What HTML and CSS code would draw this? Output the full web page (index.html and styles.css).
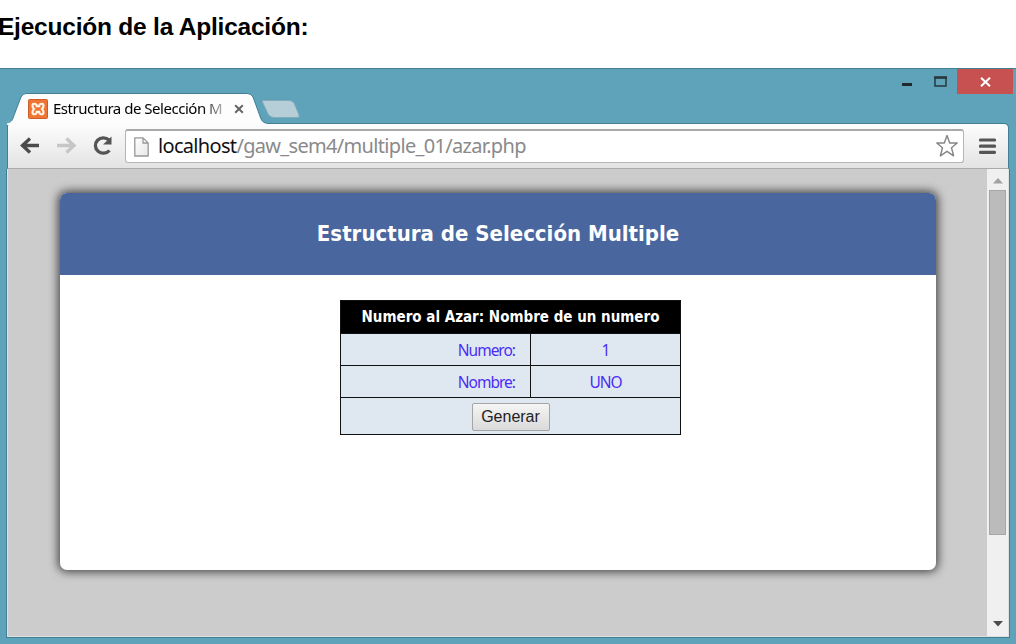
FILE: index.html
```html
<!DOCTYPE html>
<html lang="es">
<head>
<meta charset="utf-8">
<title>Ejecución de la Aplicación</title>
<link rel="stylesheet" href="styles.css">
</head>
<body>
<h1 class="doc-title"><span>Ejecución de la Aplicación:</span></h1>
<div class="window">
  <div class="titlebar">
    <div class="tabs">
      <div class="tab">
        <svg class="tab-shape" width="300" height="32" viewBox="0 0 300 32">
          <path d="M0 32V29C4 29 5 28 6 25L14 4Q16 .5 19 .5H240Q244 .5 246 4L254 26Q256 30.500 262 30.500V32Z" fill="#fdfdfd"/>
          <path d="M0 30C4 29 5 28 6 25L14 4Q16 .5 19 .5H240Q244 .5 246 4L254 26Q256 30.500 262 30.500" fill="none" stroke="#437f94" stroke-width="1"/>
          <path d="M256 7.500H282Q286 7.500 287.500 11L292 22Q293 24.500 290 24.500H267Q263 24.500 261 21L255.500 9Q255 7.500 256 7.500Z" fill="#b6ced7" stroke="#83abb9" stroke-width="1"/>
        </svg>
        <svg class="favicon" width="20" height="20" viewBox="0 0 20 20">
          <rect x=".5" y=".5" width="19" height="19" rx="1" fill="#ee7532" stroke="#cc5d26"/>
          <path d="M7.500 5Q4.500 4 4.500 6.800Q4.500 8.500 6 10Q4.500 11.500 4.500 13.200Q4.500 16 7.500 15Q8.800 14.500 8.800 12.800H11.200Q11.200 14.500 12.500 15Q15.500 16 15.500 13.200Q15.500 11.500 14 10Q15.500 8.500 15.500 6.800Q15.500 4 12.500 5Q11.200 5.500 11.200 7.200H8.800Q8.800 5.500 7.500 5Z" fill="#ee7532" stroke="#fff3e8" stroke-width="2.200"/>
        </svg>
        <span class="tab-title">Estructura de Selección M</span>
        <svg class="tab-close" width="10" height="10" viewBox="0 0 10 10"><path d="M1.200 1.200L8.800 8.800M8.800 1.200L1.200 8.800" stroke="#666" stroke-width="2"/></svg>
      </div>
    </div>
    <div class="controls">
      <svg class="minimize" width="10" height="3"><rect width="10" height="3" fill="#20292d"/></svg>
      <svg class="maximize" width="13" height="11"><path d="M1 1.500H12V10H1Z" fill="none" stroke="#29373d" stroke-width="1.500"/><path d="M0 1.500H13" stroke="#29373d" stroke-width="2.500"/></svg>
      <div class="close"><svg width="11" height="10" viewBox="0 0 11 10"><path d="M1 .7L10 9.300M10 .7L1 9.300" stroke="#fff" stroke-width="2"/></svg></div>
    </div>
  </div>
  <div class="toolbar">
    <svg class="nav" width="110" height="44" viewBox="0 0 110 44">
      <g fill="none" stroke-width="3.300">
        <path d="M32 21.500H16M23 14.500L15.500 21.500L23 28.500" stroke="#4b4b4b"/>
        <path d="M50 21.500H66M59.500 14.500L67 21.500L59.500 28.500" stroke="#c6c6c6"/>
        <path d="M102 16A8 7.700 0 1 0 102.500 26.500" stroke="#555"/>
      </g>
      <path d="M104.500 12.500V20.500H96Z" fill="#555"/>
    </svg>
    <div class="address">
      <svg width="15" height="20" viewBox="0 0 15 20"><defs><linearGradient id="pg" x1="0" y1="0" x2="1" y2="1"><stop offset="0" stop-color="#fff"/><stop offset="1" stop-color="#e7e7e7"/></linearGradient></defs><path d="M.8.800H9L14.200 6V19H.8ZM9 .8V6H14.200" fill="url(#pg)" stroke="#989898" stroke-width="1.300"/></svg>
      <span class="url"><b>localhost</b>/gaw_sem4/multiple_01/azar.php</span>
      <svg class="star" width="24" height="24" viewBox="0 0 24 24"><path d="M12 1.500L14.700 9H22.200L16.500 13.700L18.600 21.800L12 17.300L5.400 21.800L7.500 13.700L1.800 9H9.300Z" fill="#fff" stroke="#858585" stroke-width="1.400" stroke-linejoin="round"/></svg>
    </div>
    <svg class="menu" width="17" height="17" viewBox="0 0 17 17"><path d="M1.500 2H15.500M1.500 8.200H15.500M1.500 14.400H15.500" stroke="#555" stroke-width="3.200" stroke-linecap="round"/></svg>
  </div>
  <div class="viewport">
    <main class="page">
      <section class="card">
        <h2 class="card-title"><span>Estructura de Selección Multiple</span></h2>
        <table class="result">
          <colgroup><col class="col-label"><col class="col-value"></colgroup>
          <tr class="head"><th colspan="2"><span>Numero al Azar: Nombre de un numero</span></th></tr>
          <tr class="row"><td class="label"><span>Numero:</span></td><td>1</td></tr>
          <tr class="row"><td class="label"><span>Nombre:</span></td><td class="name">UNO</td></tr>
          <tr class="action"><td colspan="2"><button type="button">Generar</button></td></tr>
        </table>
      </section>
    </main>
    <div class="scrollbar">
      <svg class="arrow" width="10" height="6"><path d="M0 5.500L5 0L10 5.500Z" fill="#a2a2a2"/></svg>
      <div class="thumb"></div>
      <svg class="arrow" width="10" height="6"><path d="M0 0H10L5 5.500Z" fill="#4b4b4b"/></svg>
    </div>
  </div>
</div>
</body>
</html>
```
FILE: styles.css
```css
* { box-sizing: border-box; }
body { margin: 0; width: 1016px; height: 644px; overflow: hidden; background: #fff; display: flex; flex-direction: column; }
.doc-title { margin: 0; height: 68px; padding-top: 12px; font: bold 24.5px/30px "Liberation Sans", Arial, sans-serif; color: #000; letter-spacing: -.22px; margin-left: -2px; white-space: nowrap; }
.window { height: 576px; background: #5ea3ba; border-top: 1px solid #437f94; padding: 0 7px 7px; display: flex; flex-direction: column; }
.titlebar { height: 54px; display: flex; justify-content: space-between; }
.tabs { padding-top: 24px; }
.tab { position: relative; z-index: 1; width: 300px; height: 32px; display: flex; align-items: center; padding-left: 21px; }
.tab-shape { position: absolute; left: 0; top: 0; }
.favicon, .tab-title, .tab-close { position: relative; flex: none; }
.tab-title { margin-left: 5px; margin-top: -2px; width: 172px; overflow: hidden; white-space: nowrap; font: 15px/22px "Noto Sans", sans-serif; letter-spacing: -.48px; background: linear-gradient(90deg, #000 87%, #ccc 100%); -webkit-background-clip: text; background-clip: text; color: transparent; }
.tab-close { margin-left: 9px; }
.controls { display: flex; margin-right: -4px; height: 25px; }
.minimize { margin: 14px 22px 0 0; }
.maximize { margin: 7px 10px 0 0; }
.close { width: 56px; height: 25px; background: #c75050; display: flex; align-items: center; justify-content: center; }
.toolbar { height: 46px; width: 1002px; display: flex; align-items: center; background: linear-gradient(#fdfdfd, #e3e3e3); border: 1px solid #437f94; border-bottom-color: #aaa; border-radius: 3px 5px 0 0; }
.nav { flex: none; margin-right: 8px; margin-left: -1px; }
.address { flex: none; width: 839px; height: 34px; border: 1px solid #b5b5b5; border-top: 2px solid #aaa; border-radius: 3px; background: #fff; display: flex; align-items: center; padding-left: 8px; }
.url { margin: -1px 0 0 9px; font: 20px/28px "Noto Sans", sans-serif; letter-spacing: -.68px; color: #8a8a8a; white-space: nowrap; }
.url b { font-weight: 400; color: #111; }
.star { margin: 0 4px 0 auto; position: relative; top: -1px; }
.menu { margin-left: 15px; }
.viewport { height: 468px; display: flex; background: #ccc; border: 1px solid #e0e0e0; border-width: 0 1px 1px; outline: 1px solid #437f94; clip-path: inset(0 -1px -1px -1px); }
.page { flex: 1; padding: 24px 0 0 52px; }
.card { width: 876px; height: 377px; background: #fff; border-radius: 7px; overflow: hidden; box-shadow: 0 0 10px 2px #444; }
.card-title { margin: 0; height: 82px; background: #49669e; color: #fff; text-align: center; font: bold 22px/81px "DejaVu Sans Condensed", "DejaVu Sans", sans-serif; }
.result { width: 340px; margin: 25px 0 0 280px; table-layout: fixed; border-collapse: collapse; font: 15.5px/20px "Noto Sans", sans-serif; background: #dfe7f1; color: #4a2df5; text-align: center; letter-spacing: -1px; }
.col-label { width: 190px; }
.col-value { width: 150px; }
.result th, .result td { border: 1px solid #111; padding: 0; }
.result th { background: #000; color: #fff; font: bold 15px/20px "DejaVu Sans Condensed", sans-serif; letter-spacing: 0; }
.head { height: 33px; }
.row { height: 32px; }
.result .label { text-align: right; padding-right: 15px; }
.action { height: 37px; }
.result button { display: block; margin: 1px auto 0; width: 78px; height: 28px; padding: 0; border: 1px solid #a5a5a5; border-radius: 2px; background: linear-gradient(#f5f5f5, #dadada); font: 16px/26px "Liberation Sans", Arial, sans-serif; color: #222; }
.scrollbar { width: 21px; background: #f0f0f0; display: flex; flex-direction: column; align-items: center; padding: 9px 0; }
.thumb { width: 17px; height: 345px; margin: 6px 0 auto; background: #bbb; border: 1px solid #a5a5a5; }
```
